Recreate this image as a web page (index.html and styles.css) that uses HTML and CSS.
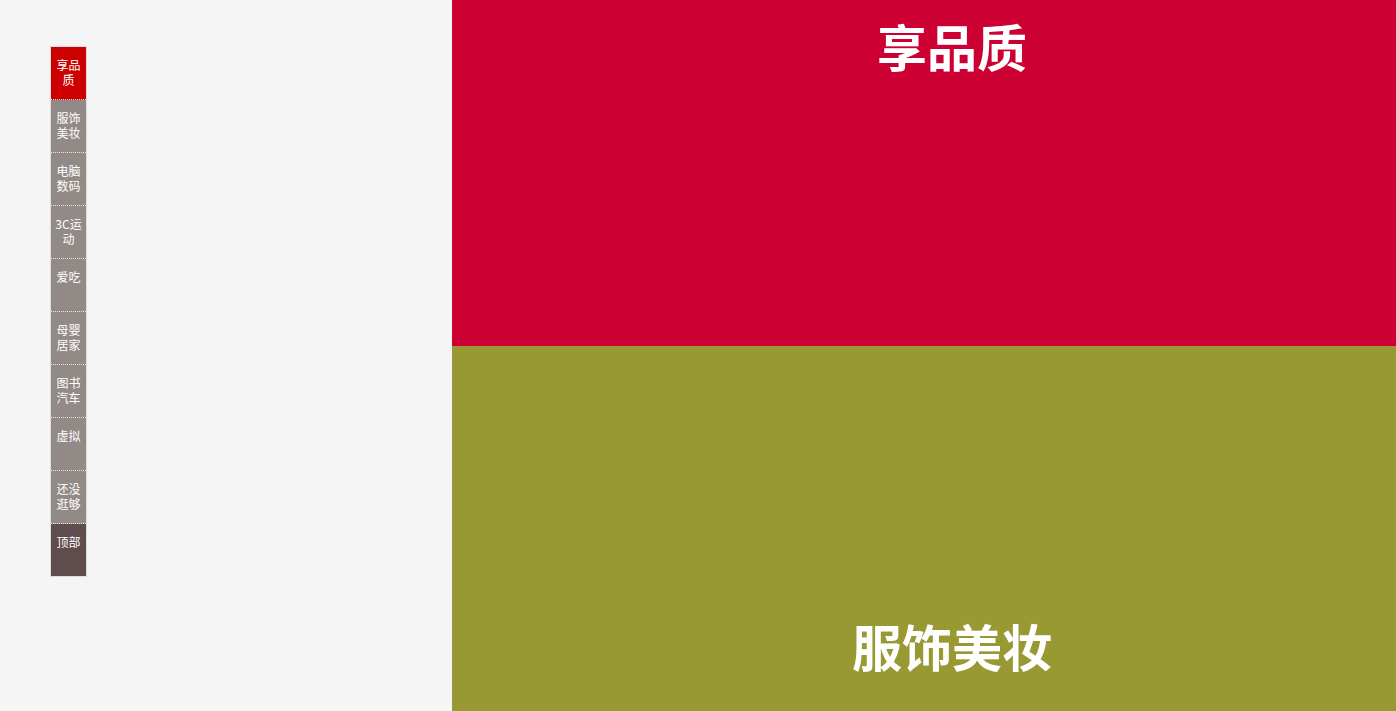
FILE: index.html
```html
<!DOCTYPE html>
<html lang="zh-CN">
<head>
<meta charset="utf-8">
<title>楼层导航</title>
<link rel="stylesheet" href="styles.css">
</head>
<body>
<div class="page">
  <aside class="side">
    <ul class="floor-nav">
      <li class="item active">享品质</li>
      <li class="item">服饰美妆</li>
      <li class="item">电脑数码</li>
      <li class="item">3C运动</li>
      <li class="item">爱吃</li>
      <li class="item">母婴居家</li>
      <li class="item">图书汽车</li>
      <li class="item">虚拟</li>
      <li class="item">还没逛够</li>
      <li class="item top">顶部</li>
    </ul>
  </aside>
  <main class="floors">
    <section class="floor floor-red">
      <h2 class="floor-title title-red">享品质</h2>
    </section>
    <section class="floor floor-olive">
      <h2 class="floor-title title-olive">服饰美妆</h2>
    </section>
  </main>
</div>
</body>
</html>
```

FILE: styles.css
```css
html, body {
  margin: 0;
  padding: 0;
  height: 100%;
  overflow: hidden;
}
body {
  background: #f5f5f5;
  font-family: "Noto Sans CJK SC", "Microsoft YaHei", sans-serif;
}
.page {
  display: flex;
  align-items: flex-start;
}
.side {
  width: 452px;
  flex-shrink: 0;
  box-sizing: border-box;
  padding: 46px 0 0 50px;
}
.floor-nav {
  list-style: none;
  margin: 0;
  padding: 0;
  width: 35px;
  border: 1px solid #dddddd;
}
.item {
  height: 52px;
  border-bottom: 1px dotted #e8e8e8;
  background: #918a87;
  color: #ffffff;
  font-size: 12px;
  line-height: 15px;
  text-align: center;
  display: flex;
  flex-direction: column;
  justify-content: flex-start;
}
.item::before {
  content: "";
  display: block;
  height: 10px;
  flex-shrink: 0;
}
.item.active {
  background: #cc0000;
}
.item.top {
  background: #5f4c4c;
  border-bottom: none;
}
.floors {
  width: 1000px;
  flex-shrink: 0;
}
.floor {
  height: 346px;
}
.floor-red {
  background: #cc0033;
}
.floor-olive {
  background: #999933;
  height: 400px;
}
.floor-title {
  margin: 0;
  color: #ffffff;
  font-size: 50px;
  font-weight: 700;
  line-height: 60px;
  text-align: center;
}
.title-red {
  padding-top: 15px;
}
.title-olive {
  padding-top: 269px;
}
```
